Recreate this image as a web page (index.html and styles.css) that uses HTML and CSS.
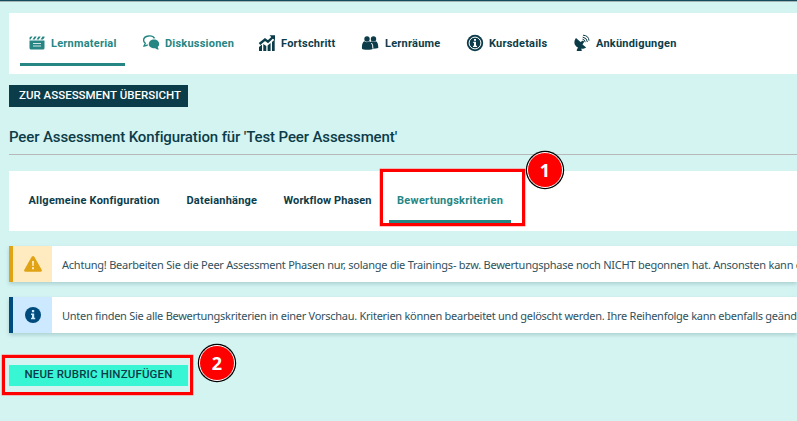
FILE: index.html
```html
<!DOCTYPE html>
<html lang="de">
<head>
<meta charset="utf-8">
<title>Peer Assessment Konfiguration</title>
<link rel="stylesheet" href="styles.css">
</head>
<body>
<div class="topline"></div>
<main>
<nav class="card course">
<a class="tab active"><svg class="icon" viewBox="0 0 16 16"><path d="M.5 5.500h15V13q0 1.500-1.500 1.500H2Q.5 14.500.5 13zM.5 4.500V3q0-1.500 1.500-1.500h1.500L1.500 4.500zM3.500 4.500l2-3h2.200l-2 3zM7.500 4.500l2-3h2.200l-2 3zM11.500 4.500l2-3h2v1l-1.500 2z"/><path class="cut" d="M4 8.500h8M4 11h8"/></svg><span>Lernmaterial</span></a>
<a class="tab teal"><svg class="icon" viewBox="0 0 16 16"><path d="M11 4.500c3 0 5.200 2 5.200 4.500 0 1.200-.6 2.200-1.500 3l1 2.500c-1.500 0-2.600-.5-3.400-1.300C8.500 13.500 5.800 11.700 5.800 9s2.200-4.500 5.200-4.500z"/><path class="line" d="M11.500 3.300C10.500 1.500 7.500.7 5.500 1 2.500 1.400.6 3 .6 5.200c0 1.400.7 2.300 1.700 3L1 11c1.600 0 2.800-.5 3.800-1.300"/></svg><span>Diskussionen</span></a>
<a class="tab"><svg class="icon" viewBox="0 0 16 16"><path d="M0 12l3-2.500V16H0zM4.300 9l3 2v5h-3zM8.600 10.500l3-2.500v8h-3zM13 7l2.700-2.500V16H13z"/><path class="trend" d="M.5 9L6 4.500l3 2.200L14 2"/><path d="M10.500.3H16v5.200l-2-1.700z"/></svg><span>Fortschritt</span></a>
<a class="tab people"><svg class="icon" viewBox="0 0 16 16"><circle cx="5" cy="4" r="2.700"/><circle cx="11.500" cy="4" r="2.700"/><path d="M2.500 6.200Q5 8 7.300 6.300l1 .8 1-.8q2.300 1.600 4.600 0Q16.300 7.500 16.300 13q-2 .7-5.600.7-.5 1-5.200 1T0 13.700C-.3 9 .8 6.800 2.500 6.200z"/><path class="hair" d="M9.500 8q1.500 1.500 1.400 5.500"/></svg><span>Lernräume</span></a>
<a class="tab"><svg class="icon" viewBox="0 0 16 16"><circle cx="8" cy="8" r="8.200"/><circle class="ring" cx="8" cy="8" r="5.900"/><path class="white" d="M7 4h2v1.700H7zM6.300 6.700H9v4h1V12H6v-1.300h1V8h-.7z"/></svg><span>Kursdetails</span></a>
<a class="tab"><svg class="icon" viewBox="0 0 16 16"><path d="M2 3l4.500 4L9 5.500l1.200 1.200L8.500 9.500l3.700 3C10 14 8 14 7 13.600l.7 1.200V16H2.800v-1.200L4 12.500C-.2 10.500-.5 6 2 3z"/><path class="wave" d="M8.500 4.200q2.400.2 2.700 3M8.700 2.200q4.200.4 4.700 4.800M9 .2q5.700.3 6 5.500"/></svg><span>Ankündigungen</span></a>
</nav>
<a class="button dark"><span>ZUR ASSESSMENT ÜBERSICHT</span></a>
<h1><span>Peer Assessment Konfiguration für 'Test Peer Assessment'</span></h1>
<nav class="card config">
<a class="tab"><span>Allgemeine Konfiguration</span></a>
<a class="tab"><span>Dateianhänge</span></a>
<a class="tab phases"><span>Workflow Phasen</span></a>
<a class="tab active"><span>Bewertungskriterien</span><i class="frame first"></i><b class="badge one">1</b></a>
</nav>
<section class="alert warning"><div class="symbol"><svg viewBox="0 0 18 16"><path d="M7.700.8q1.300-1.600 2.600 0l7.400 13q.7 2-1.300 2H1.600q-2 0-1.300-2z"/><path class="mark" d="M8 5h2l-.3 5H8.300zM8 11.300h2v2H8z"/></svg></div><p>Achtung! Bearbeiten Sie die Peer Assessment Phasen nur, solange die Trainings- bzw. Bewertungsphase noch NICHT begonnen hat. Ansonsten kann e</p></section>
<section class="alert info"><div class="symbol"><svg viewBox="0 0 16 16"><circle cx="8" cy="8" r="8"/><path class="mark" d="M6.900 3h2.300v2.200H6.900zM6 6.500h3.200v4.200h1v1.600H6v-1.600h1V8.100H6z"/></svg></div><p>Unten finden Sie alle Bewertungskriterien in einer Vorschau. Kriterien können bearbeitet und gelöscht werden. Ihre Reihenfolge kann ebenfalls geände</p></section>
<a class="button mint"><span>NEUE RUBRIC HINZUFÜGEN</span><i class="frame second"></i><b class="badge two">2</b></a>
</main>
</body>
</html>
```
FILE: styles.css
```css
*{box-sizing:border-box}
body{margin:0;height:421px;overflow:hidden;background:#d4f4f2;color:#0c3c49;font:500 11px/16px Roboto,sans-serif}
.topline{height:2px;background:#164b5b;border-bottom:1px solid #a5b4b7}
main{padding:11px 0 0 9px}
.card{display:grid;background:#fff;padding-left:11px;align-items:end}
.course{height:61px;grid-template-columns:114px 116px 103px 105px 107px 120px;padding-bottom:8px}
.config{height:60px;grid-template-columns:158px 97px 114px 122px;padding-bottom:8px}
.tab{display:flex;align-items:center;height:42px;padding:0 0 2px 9px;border-bottom:3px solid transparent;white-space:nowrap;position:relative;font-weight:700;letter-spacing:.22px}
.tab span{padding-top:2px}
.course .active{width:105px;border-color:#258684}
.config .tab{padding:0 0 1px 8.5px}
.config .active{border-color:#258684;padding-left:8px;letter-spacing:.28px}
.phases{letter-spacing:.12px}
.active,.teal{color:#258684}
.icon{width:16px;height:16px;margin-right:6px;fill:currentColor;flex:none;overflow:visible}
.people .icon{margin-right:7px}
.cut{fill:none;stroke:#fff;stroke-width:.8}
.line,.wave,.trend{fill:none;stroke:currentColor;stroke-width:1.4}
.wave{stroke-width:1}
.trend{stroke-width:2.3}
.ring,.hair{fill:none;stroke:#fff;stroke-width:1}
.white{fill:#fff}
.button{display:flex;align-items:center;justify-content:center;width:179px;position:relative;white-space:nowrap}
.dark{height:22px;margin-top:11px;padding:0 0 3px 3px;background:#0b3c49;color:#fff;font-size:11.5px;letter-spacing:0;justify-content:center}
h1{height:48px;margin:0 0 16px;padding-top:20px;border-bottom:1px solid #b8b8bb;font:500 15px/20px Roboto,sans-serif;white-space:nowrap;letter-spacing:-.12px}
.alert{display:flex;height:36px;margin-top:15px;background:#fff;border-left:4px solid #dfa315;box-shadow:0 2px 4px #57848c55;color:#31515c;font:11px/16px "Noto Sans",sans-serif}
.alert p{margin:0;padding:11px 0 0 10px;white-space:nowrap;letter-spacing:-.235px}
.symbol{width:39px;display:grid;place-items:center;background:#ffebbf;flex:none}
.symbol svg{width:18px;height:16px;fill:#dfa315}
.mark{fill:#ffebbf}
.info{border-color:#004b7d}
.info p{letter-spacing:-.27px}
.info .symbol{background:#cce9ff}
.info svg{fill:#004b7d}
.info .mark{fill:#cce9ff}
.mint{height:21px;margin-top:32px;padding-bottom:3px;background:#38f5d3;font-size:11.5px;letter-spacing:.15px}
.frame{position:absolute;border:3px solid red;box-shadow:0 0 0 .5px #ff8585}
.first{left:-9px;top:-12px;width:145px;height:57px}
.second{left:-7px;top:-10px;width:191px;height:40px}
.badge{position:absolute;width:36px;height:36px;border-radius:50%;background:red;border:1px solid #fff;box-shadow:0 0 0 1.2px #000;color:#fff;text-align:center;font:700 18px/34px "Open Sans",sans-serif;letter-spacing:0}
.one{left:138px;top:-29px}
.two{left:190px;top:-20px}
```
